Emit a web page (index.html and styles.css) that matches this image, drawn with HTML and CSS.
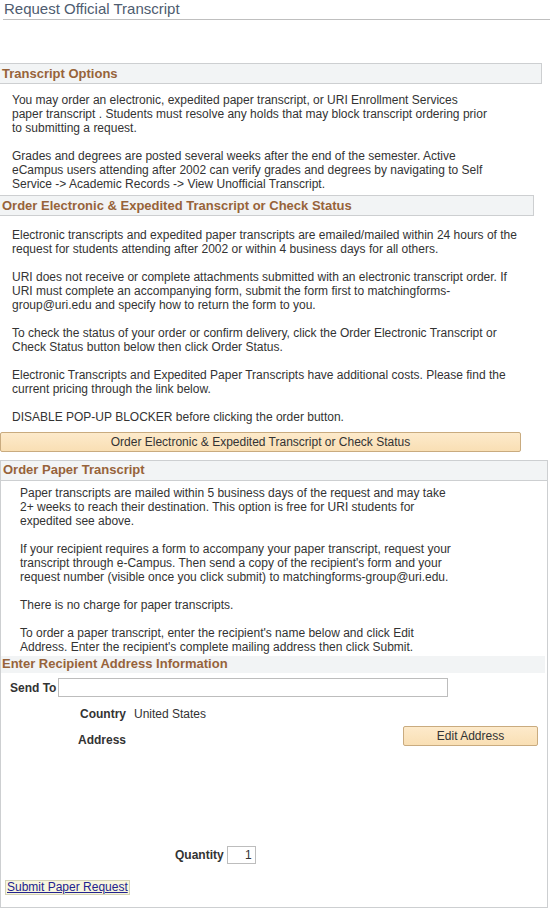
FILE: index.html
```html
<!DOCTYPE html>
<html>
<head>
<meta charset="utf-8">
<title>Request Official Transcript</title>
<link rel="stylesheet" href="styles.css">
</head>
<body>
<div class="page-title">Request Official Transcript</div>

<div class="group-head head-options">Transcript Options</div>
<div class="body body-options">
  <p>You may order an electronic, expedited paper transcript, or URI Enrollment Services<br>paper transcript . Students must resolve any holds that may block transcript ordering prior<br>to submitting a request.</p>
  <p>Grades and degrees are posted several weeks after the end of the semester. Active<br>eCampus users attending after 2002 can verify grades and degrees by navigating to Self<br>Service -&gt; Academic Records -&gt; View Unofficial Transcript.</p>
</div>

<div class="group-head head-electronic">Order Electronic &amp; Expedited Transcript or Check Status</div>
<div class="body body-electronic">
  <p>Electronic transcripts and expedited paper transcripts are emailed/mailed within 24 hours of the<br>request for students attending after 2002 or within 4 business days for all others.</p>
  <p>URI does not receive or complete attachments submitted with an electronic transcript order. If<br>URI must complete an accompanying form, submit the form first to matchingforms-<br>group@uri.edu and specify how to return the form to you.</p>
  <p>To check the status of your order or confirm delivery, click the Order Electronic Transcript or<br>Check Status button below then click Order Status.</p>
  <p>Electronic Transcripts and Expedited Paper Transcripts have additional costs. Please find the<br>current pricing through the link below.</p>
  <p>DISABLE POP-UP BLOCKER before clicking the order button.</p>
</div>
<button class="ps-btn btn-order">Order Electronic &amp; Expedited Transcript or Check Status</button>

<div class="paper-box">
  <div class="paper-head">Order Paper Transcript</div>
  <div class="body body-paper">
    <p>Paper transcripts are mailed within 5 business days of the request and may take<br>2+ weeks to reach their destination. This option is free for URI students for<br>expedited see above.</p>
    <p>If your recipient requires a form to accompany your paper transcript, request your<br>transcript through e-Campus. Then send a copy of the recipient's form and your<br>request number (visible once you click submit) to matchingforms-group@uri.edu.</p>
    <p>There is no charge for paper transcripts.</p>
    <p>To order a paper transcript, enter the recipient's name below and click Edit<br>Address. Enter the recipient's complete mailing address then click Submit.</p>
  </div>
  <div class="sub-head">Enter Recipient Address Information</div>
  <div class="row row-sendto">
    <span class="lbl lbl-sendto">Send To</span>
    <input class="txt txt-sendto" type="text">
  </div>
  <div class="row row-country">
    <span class="lbl">Country</span>
    <span class="val">United States</span>
  </div>
  <div class="row row-address">
    <span class="lbl">Address</span>
    <button class="ps-btn btn-edit">Edit Address</button>
  </div>
  <div class="row row-qty">
    <span class="lbl">Quantity</span>
    <input class="txt txt-qty" type="text" value="1">
  </div>
  <div class="row row-submit">
    <a class="submit-link" href="#">Submit Paper Request</a>
  </div>
</div>
</body>
</html>
```

FILE: styles.css
```css
html, body {
  margin: 0;
  padding: 0;
  background: #ffffff;
}
body {
  font-family: "Liberation Sans", Arial, sans-serif;
  font-size: 12px;
  color: #333333;
  width: 550px;
}
p {
  margin: 0 0 14px 0;
  line-height: 14px;
}
p:last-child {
  margin-bottom: 0;
}
.page-title {
  margin-left: 3px;
  padding-left: 1px;
  height: 19px;
  line-height: 17px;
  font-size: 15px;
  color: #4e5c70;
  border-bottom: 1px solid #bfbfbf;
}
.group-head {
  box-sizing: border-box;
  height: 21px;
  line-height: 19px;
  padding-left: 2px;
  font-size: 13px;
  font-weight: bold;
  color: #97633a;
  background: #f2f4f5;
  border: 1px solid #cdcfd1;
  border-left: none;
}
.head-options {
  margin-top: 43px;
  width: 542px;
}
.head-electronic {
  margin-top: 4px;
  width: 534px;
}
.body-options {
  padding: 9px 0 0 12px;
}
.body-electronic {
  padding: 12px 0 0 12px;
}
.ps-btn {
  display: block;
  box-sizing: border-box;
  margin: 0;
  padding: 0;
  font-family: "Liberation Sans", Arial, sans-serif;
  font-size: 12px;
  color: #333333;
  background: linear-gradient(#fdeacb, #f9dfb4);
  border: 1px solid #c9ab7f;
  border-radius: 2px;
  text-align: center;
}
.btn-order {
  margin-top: 8px;
  width: 521px;
  height: 20px;
}
.paper-box {
  margin-top: 8px;
  box-sizing: border-box;
  width: 548px;
  border: 1px solid #cdcfd1;
  padding-bottom: 12px;
}
.paper-head {
  height: 19px;
  line-height: 18px;
  padding-left: 2px;
  font-size: 13px;
  font-weight: bold;
  color: #97633a;
  background: #f2f4f5;
  border-bottom: 1px solid #cdcfd1;
}
.body-paper {
  padding: 5px 0 0 19px;
}
.sub-head {
  margin-top: 2px;
  width: 543px;
  height: 17px;
  line-height: 16px;
  padding-left: 1px;
  font-size: 13px;
  font-weight: bold;
  color: #97633a;
  background: #f2f4f5;
}
.row {
  display: flex;
  align-items: center;
}
.lbl {
  font-weight: bold;
  white-space: nowrap;
  flex-shrink: 0;
}
.txt {
  box-sizing: border-box;
  margin: 0;
  padding: 0 3px;
  font-family: "Liberation Sans", Arial, sans-serif;
  font-size: 12px;
  color: #333333;
  border: 1px solid #bdbdbd;
  background: #ffffff;
  outline: none;
  flex-shrink: 0;
}
.row-sendto {
  margin-top: 5px;
  padding-left: 9px;
  height: 19px;
}
.lbl-sendto {
  width: 46px;
}
.txt-sendto {
  margin-left: 2px;
  width: 390px;
  height: 19px;
}
.row-country {
  margin-top: 10px;
  padding-left: 79px;
  height: 14px;
}
.val {
  margin-left: 8px;
}
.row-address {
  margin-top: 5px;
  padding-left: 77px;
  padding-right: 9px;
  height: 20px;
  justify-content: space-between;
  align-items: flex-start;
}
.row-address .lbl {
  line-height: 14px;
  margin-top: 7px;
}
.btn-edit {
  width: 135px;
  height: 20px;
}
.row-qty {
  margin-top: 100px;
  padding-left: 174px;
  height: 18px;
}
.txt-qty {
  margin-left: 3px;
  width: 29px;
  height: 18px;
  text-align: right;
}
.row-submit {
  margin-top: 16px;
  padding-left: 4px;
}
.submit-link {
  display: inline-block;
  box-sizing: border-box;
  height: 15px;
  line-height: 13px;
  padding: 0 1px;
  color: #23238e;
  text-decoration: underline;
  background: #f8f6de;
  border: 1px solid #d4d2b6;
}
```
